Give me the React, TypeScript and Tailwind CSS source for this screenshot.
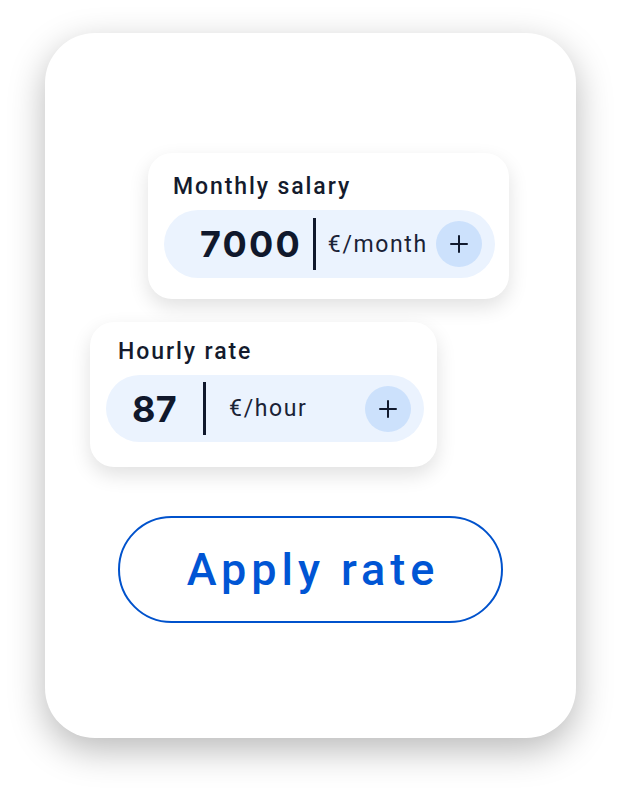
import React from "react";

function Plus() {
  return (
    <div className="flex h-[46px] w-[46px] shrink-0 items-center justify-center rounded-full bg-[#cce1fc]">
      <svg width="20" height="20" viewBox="0 0 20 20" fill="none" stroke="#111a2e" strokeWidth="2" strokeLinecap="round">
        <path d="M10 2v16M2 10h16" />
      </svg>
    </div>
  );
}

export default function App() {
  return (
    <div className="min-h-[795px] w-[621px] bg-white pt-[33px] pl-[45px]" style={{ fontFamily: "Roboto, 'Liberation Sans', sans-serif" }}>
      <div className="flex h-[705px] w-[531px] flex-col items-start rounded-[50px] bg-white pt-[120px] shadow-[0_12px_36px_rgba(0,0,0,0.28)]">
        {/* Monthly */}
        <div className="ml-[103px] flex h-[146px] w-[361px] flex-col rounded-[24px] bg-white pt-[22px] pl-[16px] shadow-[0_8px_20px_rgba(0,0,0,0.12)]">
          <div className="ml-[9px] text-[23px] font-medium leading-[24px] tracking-[0.083em] text-[#141b2d]">Monthly salary</div>
          <div className="mt-[11px] flex h-[68px] w-[331px] items-center rounded-full bg-[#ebf3fe] pr-[13px]">
            <div className="ml-[36px] text-[36px] font-bold leading-none tracking-[0.06em] text-[#10182c]" style={{ fontFamily: "Inter, sans-serif" }}>7000</div>
            <div className="ml-[11px] h-[52px] w-[3px] bg-[#10182c]" />
            <div className="ml-[12px] text-[23px] leading-none tracking-[0.07em] text-[#1a2236]">€/month</div>
            <div className="ml-auto"><Plus /></div>
          </div>
        </div>
        {/* Hourly */}
        <div className="ml-[45px] mt-[23px] flex h-[145px] w-[347px] flex-col rounded-[24px] bg-white pt-[18px] pl-[16px] shadow-[0_8px_20px_rgba(0,0,0,0.12)]">
          <div className="ml-[12px] text-[23px] font-medium leading-[24px] tracking-[0.083em] text-[#141b2d]">Hourly rate</div>
          <div className="mt-[11px] flex h-[67px] w-[318px] items-center rounded-full bg-[#ebf3fe] pr-[13px]">
            <div className="ml-[26px] text-[36px] font-bold leading-none tracking-[0.01em] text-[#10182c]" style={{ fontFamily: "Inter, sans-serif" }}>87</div>
            <div className="ml-[26px] h-[53px] w-[3px] bg-[#10182c]" />
            <div className="ml-[23px] text-[23px] leading-none tracking-[0.07em] text-[#1a2236]">€/hour</div>
            <div className="ml-auto"><Plus /></div>
          </div>
        </div>
        {/* Button */}
        <div className="ml-[73px] mt-[49px] flex h-[107px] w-[385px] items-center justify-center rounded-full border-[2.5px] border-[#0052cc] bg-white">
          <span className="pl-[0.11em] text-[45px] font-medium leading-none tracking-[0.11em] text-[#0055d4]">Apply rate</span>
        </div>
      </div>
    </div>
  );
}
